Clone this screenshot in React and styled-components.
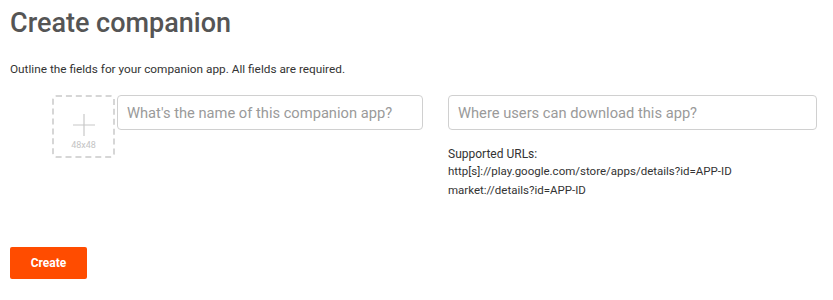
import styled, { createGlobalStyle } from "styled-components";

const GlobalStyle = createGlobalStyle`
  body {
    margin: 0;
    background: #fff;
    font-family: Roboto, "Liberation Sans", sans-serif;
  }
`;

export default function App() {
  return (
    <Page>
      <GlobalStyle />
      <Title>Create companion</Title>
      <Lead>Outline the fields for your companion app. All fields are required.</Lead>
      <FormRow>
        <IconDrop>
          <Plus>
            <svg width="22" height="22" viewBox="0 0 22 22">
              <path d="M11 0v22M0 11h22" stroke="#c8c8c8" strokeWidth="1.2" fill="none" />
            </svg>
          </Plus>
          <Size>48x48</Size>
        </IconDrop>
        <Field width="306px" placeholder="What's the name of this companion app?" />
        <Column>
          <Field width="369px" placeholder="Where users can download this app?" />
          <Hint>
            <HintTitle>Supported URLs:</HintTitle>
            <HintLine>http[s]://play.google.com/store/apps/details?id=APP-ID</HintLine>
            <HintLine>market://details?id=APP-ID</HintLine>
          </Hint>
        </Column>
      </FormRow>
      <Button>Create</Button>
    </Page>
  );
}

const Page = styled.div`
  padding: 7px 10px 0;
  width: 833px;
  height: 300px;
  box-sizing: border-box;
`;

const Title = styled.h1`
  margin: 0;
  font-size: 27px;
  font-weight: 500;
  color: #555;
  line-height: 32px;
`;

const Lead = styled.p`
  margin: 23px 0 0;
  font-size: 11.8px;
  color: #333;
  line-height: 14px;
`;

const FormRow = styled.div`
  display: flex;
  align-items: flex-start;
  margin: 19px 0 0 42px;
`;

const IconDrop = styled.div`
  width: 63px;
  height: 63px;
  box-sizing: border-box;
  border: 2px dashed #d6d6d6;
  border-radius: 4px;
  display: flex;
  flex-direction: column;
  align-items: center;
  padding-top: 17px;
  margin-right: 2px;
`;

const Plus = styled.div`
  display: flex;
  height: 22px;
`;

const Size = styled.span`
  margin-top: 4px;
  font-size: 9px;
  color: #c4c4c4;
`;

const Field = styled.input`
  width: ${({ width }) => width};
  height: 35px;
  box-sizing: border-box;
  border: 1px solid #d0d0d0;
  border-radius: 4px;
  padding: 0 9px;
  font-family: Roboto, "Liberation Sans", sans-serif;
  font-size: 14.7px;
  color: #333;
  outline: none;
  &::placeholder {
    color: #9a9a9a;
  }
`;

const Column = styled.div`
  display: flex;
  flex-direction: column;
  margin-left: 25px;
`;

const Hint = styled.div`
  margin-top: 17px;
  display: flex;
  flex-direction: column;
  color: #333;
`;

const HintTitle = styled.span`
  font-size: 12px;
  line-height: 14px;
`;

const HintLine = styled.span`
  font-size: 11.5px;
  line-height: 18px;
  margin-top: 1px;
`;

const Button = styled.button`
  display: block;
  margin-top: 48px;
  width: 77px;
  height: 32px;
  border: none;
  border-radius: 2px;
  background: #ff4c00;
  color: #fff;
  font-family: Roboto, "Liberation Sans", sans-serif;
  font-size: 12px;
  font-weight: 700;
  cursor: pointer;
`;
